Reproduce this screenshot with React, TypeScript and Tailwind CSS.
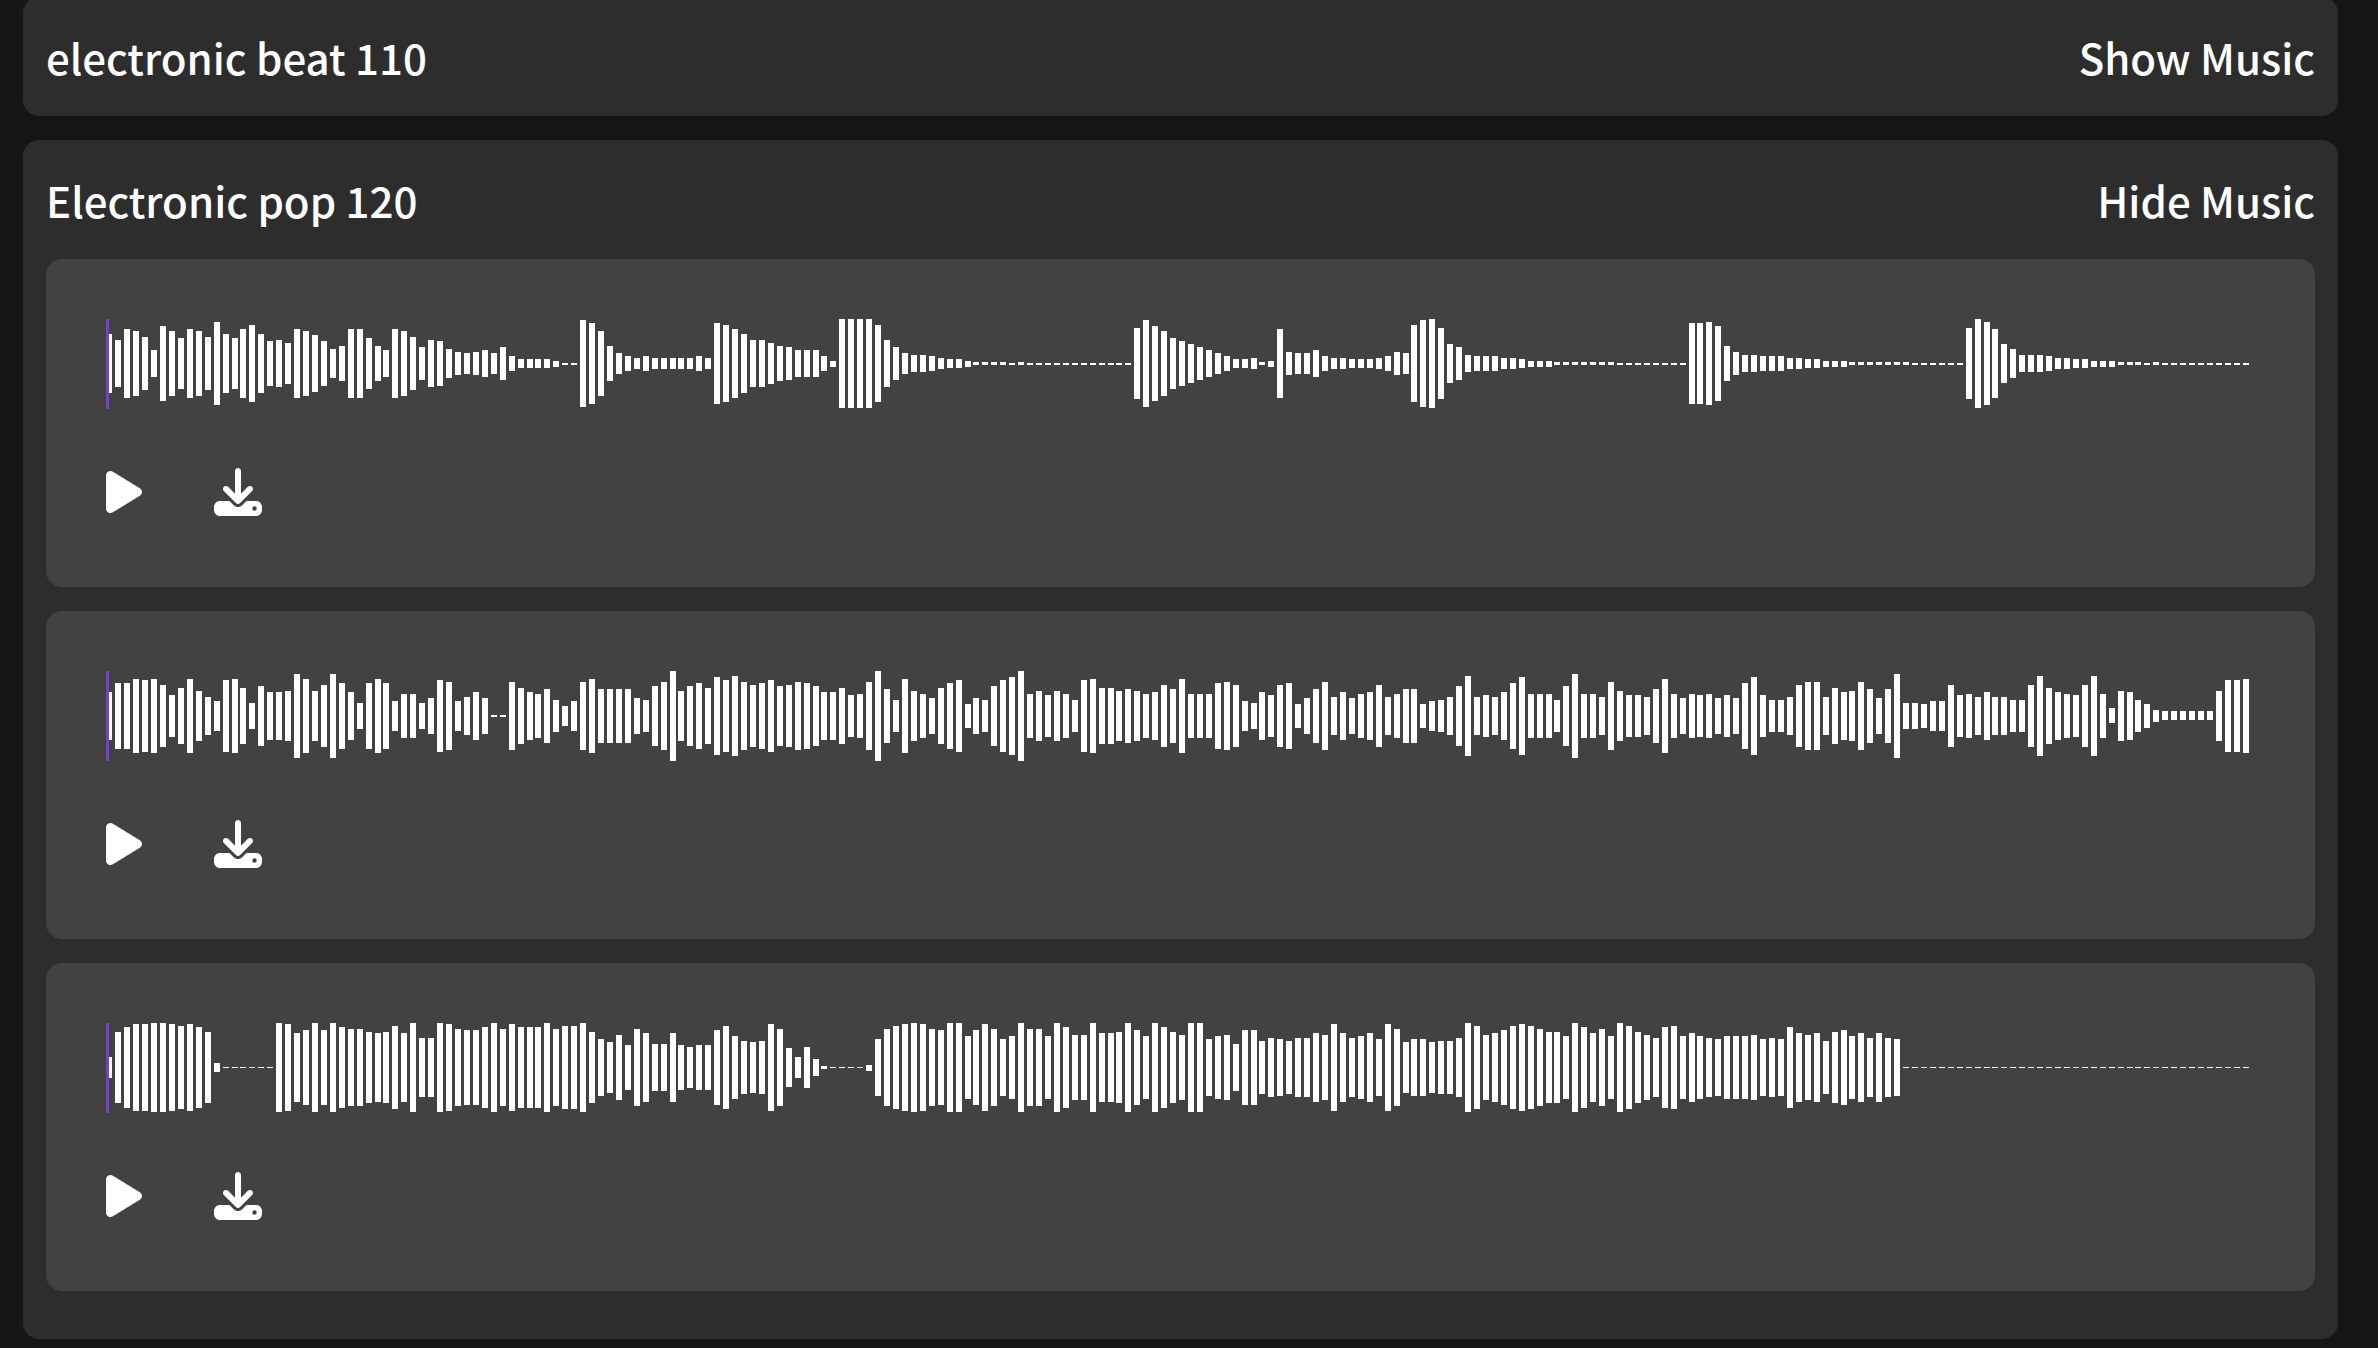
import { useState } from "react";
import { FaDownload, FaPlay } from "react-icons/fa6";

const run = (count: number, height: number): number[] => Array(count).fill(height);

const BAR_PITCH = 8.9388;

const trackOne: number[] = [
  59, 47, 69, 65, 53, 27, 75, 65, 51, 69, 65, 53, 83, 59, 51, 69, 77, 59, 45, 47, 41, 69, 65, 57, 45, 29, 35, 69, 69,
  51, 35, 27, 69, 65, 53, 33, 47, 45, 29, 23, 21, 23, 27, 21, 33, 15, 9, 9, 9, 9, 6, 2, 2, 87, 81, 65, 35, 21, 15, 11,
  15, 11, 11, 11, 11, 11, 15, 11, 81, 77, 69, 59, 47, 47, 41, 35, 33, 27, 27, 27, 15, 6, 89, 89, 89, 89, 77, 47, 33,
  21, 17, 17, 15, 11, 9, 9, 6, 3, 3, 3, 3, 2, 3,
  ...run(12, 2),
  71, 87, 75, 65, 51, 45, 39, 33, 27, 21, 15, 9, 9, 11, 3, 6, 69, 23, 21, 21, 27, 15, 11, 11, 9, 9, 9, 11, 15, 23, 21,
  77, 87, 89, 71, 39, 33, 17, 15, 15, 15, 11, 11, 9, 6, 6, 6,
  ...run(7, 3),
  ...run(8, 2),
  81, 81, 83, 75, 35, 23, 17, 17, 15, 15, 15, 11, 11, 9, 9, 6, 6, 6,
  ...run(7, 3),
  ...run(6, 2),
  71, 89, 83, 69, 39, 29, 17, 17, 17, 15, 11, 11, 9, 9, 6, 6, 6, 3, 3, 3, 2, 3,
  ...run(10, 2),
];

const trackTwo: number[] = [
  48, 66, 66, 74, 72, 74, 62, 42, 56, 74, 50, 38, 30, 72, 74, 56, 26, 60, 48, 48, 50, 84, 74, 50, 62, 84, 66, 48, 26,
  66, 74, 66, 30, 44, 44, 26, 36, 72, 68, 30, 38, 48, 36, 2, 2, 68, 56, 48, 44, 54, 32, 20, 30, 68, 74, 54, 54, 54,
  54, 36, 32, 60, 68, 90, 50, 60, 66, 56, 78, 72, 80, 68, 62, 66, 72, 60, 62, 68, 66, 60, 48, 48, 56, 42, 44, 68, 90,
  54, 32, 74, 50, 44, 36, 56, 66, 72, 24, 36, 32, 60, 72, 78, 90, 44, 50, 42, 50, 44, 32, 72, 74, 56, 56, 50, 54, 50,
  44, 48, 62, 54, 74, 44, 44, 44, 66, 68, 62, 30, 26, 48, 42, 62, 66, 24, 36, 54, 68, 38, 48, 36, 44, 48, 62, 38, 44,
  54, 54, 24, 30, 32, 38, 60, 80, 38, 42, 38, 48, 66, 78, 44, 44, 44, 32, 60, 84, 44, 44, 38, 68, 50, 42, 42, 38, 54,
  74, 44, 36, 44, 42, 44, 36, 42, 36, 66, 78, 42, 32, 32, 38, 62, 68, 68, 38, 56, 48, 50, 68, 54, 36, 54, 84, 26, 26,
  24, 30, 30, 62, 42, 44, 38, 48, 38, 38, 32, 32, 62, 80, 56, 48, 44, 42, 62, 80, 44, 15, 50, 48, 32, 24, 12,
  ...run(6, 9),
  50, 72, 72, 74,
];

const trackThree: number[] = [
  21, 71, 81, 87, 87, 89, 89, 87, 83, 87, 81, 71, 9,
  ...run(6, 1),
  89, 87, 69, 75, 89, 75, 89, 81, 77, 77, 71, 69, 71, 83, 69, 89, 59, 59, 89, 87, 77, 75, 75, 81, 89, 77, 87, 81, 81,
  81, 89, 77, 83, 83, 89, 71, 57, 51, 65, 45, 77, 69, 47, 47, 69, 45, 41, 45, 45, 75, 83, 63, 53, 51, 53, 87, 77, 39,
  21, 41, 17, 3,
  ...run(4, 1),
  6, 57, 77, 83, 87, 89, 87, 77, 75, 89, 89, 63, 75, 87, 77, 57, 63, 89, 77, 77, 63, 89, 81, 65, 65, 89, 69, 69, 71,
  89, 75, 63, 89, 81, 71, 65, 89, 89, 57, 63, 65, 47, 75, 75, 53, 59, 57, 53, 59, 59, 69, 65, 87, 69, 59, 63, 69, 57,
  87, 77, 51, 57, 57, 51, 53, 53, 59, 89, 83, 65, 69, 75, 83, 87, 83, 77, 71, 71, 63, 89, 81, 69, 77, 63, 89, 83, 71,
  65, 59, 81, 83, 63, 69, 63, 59, 57, 63, 63, 63, 65, 57, 59, 57, 81, 69, 65, 69, 53, 71, 75, 63, 69, 59, 69, 59, 57,
  ...run(39, 1),
];

function Waveform({ heights }: { heights: number[] }) {
  return (
    <svg
      className="block h-[90px] w-full"
      viewBox="0 0 2149 90"
      preserveAspectRatio="none"
      shapeRendering="crispEdges"
      role="img"
      aria-label="Waveform"
    >
      {heights.map((height, i) => (
        <rect
          key={i}
          x={Math.floor(i * BAR_PITCH + 0.88)}
          y={Math.floor((90 - height) / 2)}
          width={6}
          height={height}
          fill="#ffffff"
        />
      ))}
      <rect x={0} y={0} width={3} height={90} fill="#6f42cf" />
    </svg>
  );
}

function Track({ heights }: { heights: number[] }) {
  return (
    <li className="rounded-2xl bg-[#424242] px-[60px] pt-[60px] pb-[71px]">
      <Waveform heights={heights} />
      <div className="mt-[59px] flex gap-[72px]">
        <button type="button" aria-label="Play" className="block">
          <FaPlay className="h-12 w-9" />
        </button>
        <button type="button" aria-label="Download" className="block">
          <FaDownload className="size-12" />
        </button>
      </div>
    </li>
  );
}

function Group({ title, tracks, initiallyOpen }: { title: string; tracks: number[][]; initiallyOpen: boolean }) {
  const [open, setOpen] = useState(initiallyOpen);
  return (
    <section className="rounded-2xl bg-[#2d2d2d] px-[23px] py-6">
      <div className="flex items-center justify-between text-[42px] leading-[71px]">
        <h2>{title}</h2>
        <button type="button" aria-expanded={open} onClick={() => setOpen(!open)}>
          {open ? "Hide Music" : "Show Music"}
        </button>
      </div>
      {open && tracks.length > 0 && (
        <ul className="mt-6 mb-6 flex flex-col gap-6">
          {tracks.map((heights, i) => (
            <Track key={i} heights={heights} />
          ))}
        </ul>
      )}
    </section>
  );
}

export default function App() {
  return (
    <div className="min-h-screen overflow-hidden bg-[#151515] font-['Noto_Sans_CJK_JP','Noto_Sans_CJK_SC',sans-serif] font-medium text-white">
      <main className="-mt-[3px] mr-10 ml-[23px] flex flex-col gap-6">
        <Group title="electronic beat 110" tracks={[]} initiallyOpen={false} />
        <Group title="Electronic pop 120" tracks={[trackOne, trackTwo, trackThree]} initiallyOpen />
      </main>
    </div>
  );
}
